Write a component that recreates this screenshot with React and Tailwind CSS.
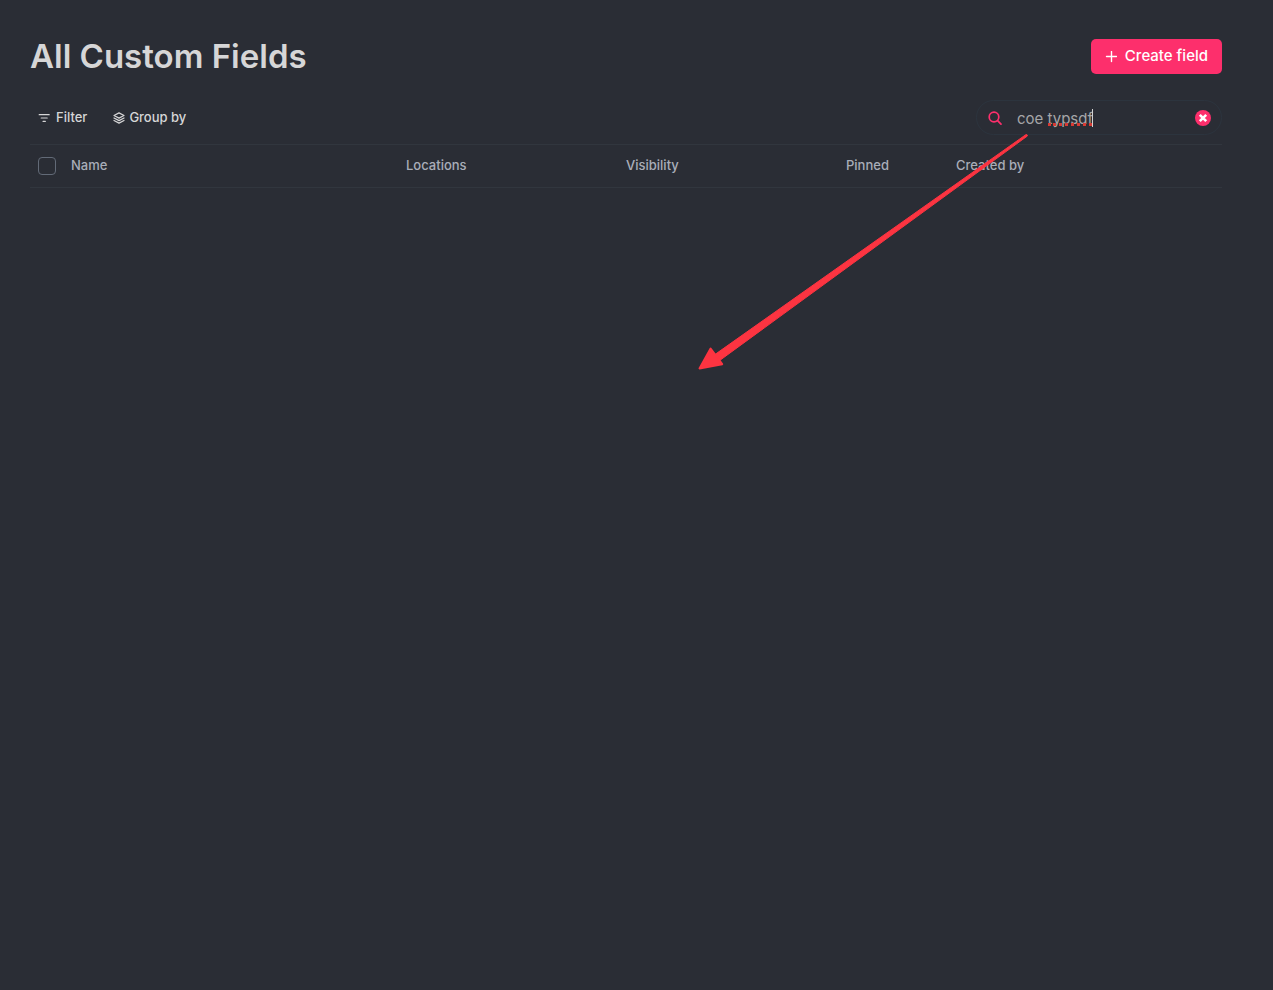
import { useState } from "react";

const columns = [
  { label: "Name" },
  { label: "Locations", width: "w-[220px]" },
  { label: "Visibility", width: "w-[220px]" },
  { label: "Pinned", width: "w-[110px]" },
  { label: "Created by", width: "w-[266px]" },
];

function FilterIcon() {
  return (
    <svg className="w-3 h-3" viewBox="0 0 12 12" fill="none" stroke="currentColor" strokeLinecap="round">
      <path d="M1.2 2.7h10M3.2 6h6M5 9.3h2.4" strokeWidth="1.2" />
    </svg>
  );
}

function LayersIcon() {
  return (
    <svg className="w-3 h-3" viewBox="0 0 12 12" fill="none" stroke="currentColor" strokeLinejoin="round" strokeLinecap="round">
      <path d="M6 .9 11 3.5 6 6.1 1 3.5z" strokeWidth="1.2" />
      <path d="M1 6 6 8.6 11 6M1 8.5l5 2.6 5-2.6" strokeWidth="1.2" />
    </svg>
  );
}

function SearchBox() {
  const [query, setQuery] = useState("coe typsdf");

  return (
    <div className="relative w-[246px]">
      <div className="flex items-center h-[35px] pl-[11px] pr-2.5 rounded-full border border-[#2c343e]">
        <svg className="w-3.5 h-3.5 shrink-0 text-[#fd2f6c]" viewBox="0 0 14 14" fill="none" stroke="currentColor" strokeWidth="1.7" strokeLinecap="round">
          <circle cx="6" cy="6" r="4.8" />
          <path d="m9.6 9.6 3.4 3.6" />
        </svg>
        <input
          type="text"
          aria-label="Search fields"
          spellCheck={false}
          value={query}
          onChange={(e) => setQuery(e.target.value)}
          className="flex-1 min-w-0 ml-[15px] pt-0.5 bg-transparent text-[15px] leading-5 text-[#a5a6a8] outline-none"
        />
        <button type="button" aria-label="Clear search" onClick={() => setQuery("")} className="w-4 h-4 shrink-0 rounded-full bg-[#fd2f6c] text-white">
          <svg className="w-4 h-4" viewBox="0 0 16 16" fill="none" stroke="currentColor" strokeWidth="2.6">
            <path d="m4.8 4.8 6.4 6.4M11.2 4.8l-6.4 6.4" />
          </svg>
        </button>
      </div>

      {/* spelling mark and caret over the typed text */}
      {query && (
        <>
          <span className="absolute left-[72px] top-[23px] w-11 border-b-3 border-dotted border-[#d83a34] pointer-events-none" />
          <span className="absolute left-[116px] top-[9px] w-px h-[18px] bg-[#d0d0d0] pointer-events-none" />
        </>
      )}

      {/* annotation arrow */}
      <svg className="absolute right-[193px] top-[34px] w-[332px] h-[237px] pointer-events-none" viewBox="0 0 332 237" fill="#fc3441">
        <path d="M330.4 2 20.6 228 16.4 221.6 328.8.7q1.6-.5 1.6 1.3z" stroke="#fc3441" strokeWidth="1" strokeLinejoin="round" />
        <path d="M2.5 234.4 13.6 214.5 25.2 230.2z" stroke="#fc3441" strokeWidth="2" strokeLinejoin="round" />
      </svg>
    </div>
  );
}

export default function App() {
  return (
    <div className="min-h-screen bg-[#2a2d35] pl-[30px] pr-[51px] pt-[35px] font-['Inter',sans-serif] overflow-x-hidden">
      <header className="flex items-center justify-between">
        <h1 className="text-[33px] leading-[43px] font-semibold text-[#d6d6d7]">All Custom Fields</h1>
        <button type="button" className="flex items-center gap-2 h-[35px] px-[14px] rounded-[5px] bg-[#fd2f6c] text-[15px] font-medium text-white">
          <svg className="w-3 h-3" viewBox="0 0 12 12" fill="none" stroke="currentColor" strokeWidth="1.4" strokeLinecap="round">
            <path d="M6.5 .5v10M1.5 5.5h10" />
          </svg>
          Create field
        </button>
      </header>

      <div className="flex items-center justify-between mt-[22px]">
        <div className="flex items-center gap-[26px] pl-2 text-[13px] font-medium text-[#d6d6d7]">
          <button type="button" className="flex items-center gap-1.5">
            <FilterIcon />
            Filter
          </button>
          <button type="button" className="flex items-center gap-1">
            <LayersIcon />
            Group by
          </button>
        </div>
        <SearchBox />
      </div>

      <table className="w-full mt-[9px] table-fixed text-[13px] text-left">
        <thead>
          <tr className="h-[43px] border-y border-[#31363e] text-[#a9adb9]">
            <th className="w-[41px] pl-2 font-medium">
              <input
                type="checkbox"
                aria-label="Select all fields"
                className="block w-[18px] h-[18px] appearance-none rounded-sm border border-[#626a77] checked:bg-[#fd2f6c]"
              />
            </th>
            {columns.map((col) => (
              <th key={col.label} className={`${col.width || ""} font-medium`}>
                {col.label}
              </th>
            ))}
          </tr>
        </thead>
      </table>
    </div>
  );
}
